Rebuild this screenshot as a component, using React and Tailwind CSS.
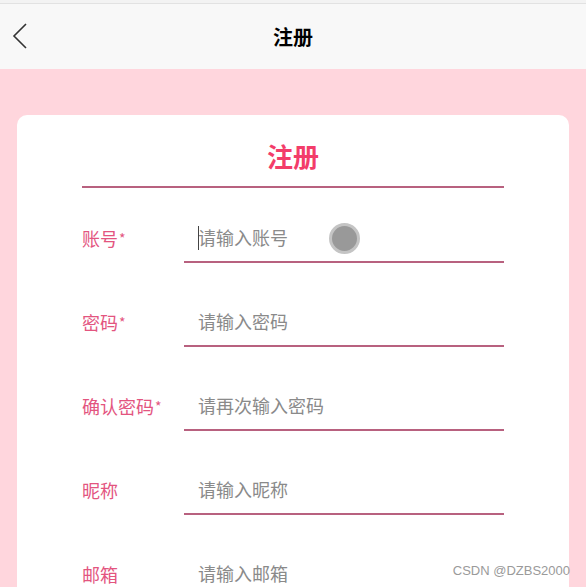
const fields = [
  { label: '账号', required: true, placeholder: '请输入账号', focused: true },
  { label: '密码', required: true, placeholder: '请输入密码' },
  { label: '确认密码', required: true, placeholder: '请再次输入密码' },
  { label: '昵称', required: false, placeholder: '请输入昵称' },
  { label: '邮箱', required: false, placeholder: '请输入邮箱' },
]

const font = { fontFamily: '"Noto Sans CJK SC", "Noto Sans", sans-serif' }

export default function App() {
  return (
    <div className="w-[586px] h-[587px] overflow-hidden relative bg-[#ffd6dd]" style={font}>
      {/* Top bar */}
      <div className="h-[4px] bg-[#f3f3f3] border-b border-[#e2e2e2]"></div>
      <div className="h-[65px] bg-[#f8f8f8] flex items-center relative">
        <svg className="absolute left-[10px] top-[17px]" width="22" height="32" viewBox="0 0 22 32" fill="none">
          <polyline points="16,3 4,15 16,27" stroke="#333" strokeWidth="1.6" />
        </svg>
        <h1 className="flex-1 text-center text-[20px] font-bold text-black">注册</h1>
      </div>

      {/* Card */}
      <div className="mt-[46px] mx-[17px] bg-white rounded-[10px] px-[65px] pt-[23px] pb-[40px]">
        <h2 className="text-center text-[26px] leading-[36px] font-bold text-[#f33d6a]">注册</h2>
        <div className="mt-[12px] h-[2px] bg-[#b8617f]"></div>

        <div className="mt-[31px] flex flex-col gap-[40px]">
          {fields.map((f) => (
            <div key={f.label} className="flex items-center">
              <div className="w-[102px] text-[18px] text-[#e3557f] leading-[24px] mb-[6px]">
                {f.label}
                {f.required && <span className="text-[14px] align-top ml-[1px]">*</span>}
              </div>
              <div className="flex-1 h-[44px] border-b-2 border-[#b8617f] flex items-center pl-[14px] pb-[6px] relative">
                {f.focused && <span className="absolute left-[14px] top-[7px] w-[1px] h-[24px] bg-[#444]"></span>}
                <span className="text-[18px] text-[#8a8a8a]">{f.placeholder}</span>
                {f.focused && (
                  <span className="absolute left-[145px] top-[4px] w-[31px] h-[31px] rounded-full bg-[#999] border-[3px] border-[#c4c4c4]"></span>
                )}
              </div>
            </div>
          ))}
        </div>
      </div>

      <div className="absolute right-[16px] bottom-[7px] text-[13px] text-[#9a9a9a]" style={{ fontFamily: '"Liberation Sans", Arial, sans-serif' }}>
        CSDN @DZBS2000
      </div>
    </div>
  )
}
